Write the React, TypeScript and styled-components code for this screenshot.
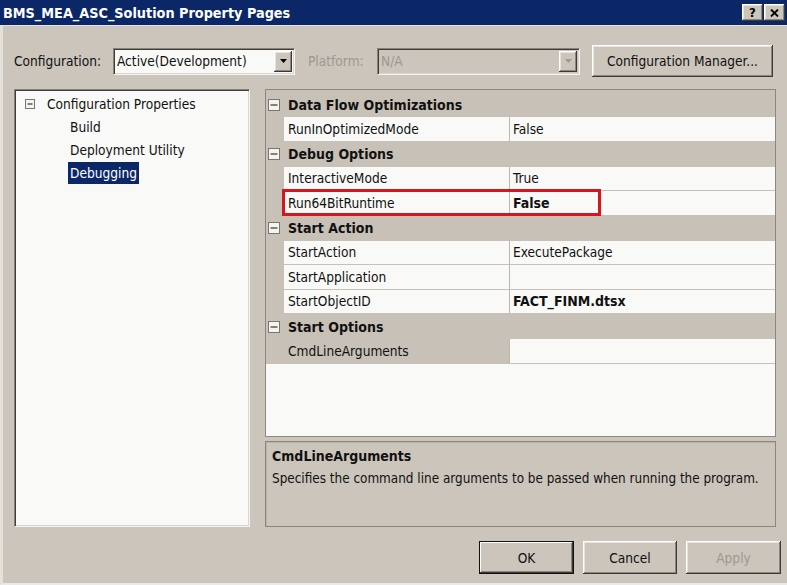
import React from "react";
import styled, { createGlobalStyle, css } from "styled-components";

const FONT = `"DejaVu Sans Condensed", "Liberation Sans", sans-serif`;
const FACE = "#cbc5bc";
const CAT = "#c8c1b7";
const PAPER = "#f9f9f7";

const Global = createGlobalStyle`
  html, body { margin: 0; padding: 0; background: #f2f0ec; }
  body { font-family: ${FONT}; font-size: 13.6px; color: #111; }
  * { box-sizing: border-box; }
`;

const Window = styled.div`
  width: 787px;
  height: 585px;
  display: flex;
  flex-direction: column;
  background: ${FACE};
  overflow: hidden;
`;

const TitleBar = styled.div`
  height: 26px;
  flex: none;
  display: flex;
  align-items: center;
  padding: 0 2px 0 3px;
  background: #0b2768;
  border-bottom: 1px solid #e4e0da;
`;

const TitleText = styled.div`
  flex: 1;
  color: #fff;
  font-weight: bold;
  font-size: 14.3px;
  white-space: nowrap;
`;

const raised = css`
  background: ${FACE};
  box-shadow: inset -1px -1px #3c3a36, inset 1px 1px #ffffff,
    inset -2px -2px #8a857d, inset 2px 2px #e6e2dc;
`;

const sunken = css`
  border-top: 1px solid #86827a;
  border-left: 1px solid #86827a;
  border-bottom: 1px solid #f6f4f0;
  border-right: 1px solid #f6f4f0;
  box-shadow: inset 1px 1px #3f3d3a, inset -1px -1px #d9d5ce;
`;

const CaptionButton = styled.div`
  ${raised};
  width: 21px;
  height: 17px;
  margin-left: 1px;
  display: flex;
  align-items: center;
  justify-content: center;
  font-weight: bold;
  font-size: 13px;
  color: #000;
`;

const Body = styled.div`
  flex: 1;
  display: flex;
  flex-direction: column;
  padding: 18px 11px 0 11px;
  border-left: 3px solid #e4e0da;
  border-bottom: 2px solid #ece9e4;
`;

const ConfigRow = styled.div`
  height: 34px;
  display: flex;
  align-items: center;
  padding-right: 3px;
`;

const FieldLabel = styled.div<{ $width: number; $indent?: number; $disabled?: boolean }>`
  width: ${(p) => p.$width}px;
  padding-left: ${(p) => p.$indent ?? 0}px;
  flex: none;
  white-space: nowrap;
  color: ${(p) => (p.$disabled ? "#9e988f" : "#111")};
`;

const Combo = styled.div<{ $width: number; $disabled?: boolean }>`
  ${sunken};
  width: ${(p) => p.$width}px;
  height: 27px;
  flex: none;
  display: flex;
  align-items: center;
  padding: 0 1px 0 3px;
  background: ${(p) => (p.$disabled ? FACE : PAPER)};
  color: ${(p) => (p.$disabled ? "#9e988f" : "#111")};
`;

const ComboText = styled.div`
  flex: 1;
  white-space: nowrap;
  overflow: hidden;
`;

const DropButton = styled.div`
  ${raised};
  width: 18px;
  height: 21px;
  margin-right: 1px;
  display: flex;
  align-items: center;
  justify-content: center;
`;

const PushButton = styled.div<{ $width: number; $default?: boolean; $disabled?: boolean }>`
  width: ${(p) => p.$width}px;
  height: 33px;
  flex: none;
  display: flex;
  align-items: center;
  justify-content: center;
  white-space: nowrap;
  color: ${(p) => (p.$disabled ? "#9e988f" : "#111")};
  ${raised};
  ${(p) =>
    p.$default &&
    css`
      box-shadow: inset 0 0 0 1px #111, inset -2px -2px #3c3a36, inset 2px 2px #ffffff,
        inset -3px -3px #8a857d;
    `}
`;

const ManagerButton = styled(PushButton)`
  height: 32px;
  margin-left: auto;
`;

const Main = styled.div`
  margin-top: 11px;
  height: 438px;
  display: flex;
  gap: 15px;
`;

const TreePanel = styled.div`
  ${sunken};
  width: 236px;
  flex: none;
  background: ${PAPER};
  padding-top: 2px;
`;

const TreeRow = styled.div<{ $indent: number }>`
  height: 23px;
  display: flex;
  align-items: center;
  gap: 10px;
  padding-left: ${(p) => p.$indent}px;
  white-space: nowrap;
`;

const TreeLabel = styled.span<{ $selected?: boolean }>`
  line-height: 22px;
  padding: 0 2px;
  ${(p) =>
    p.$selected &&
    css`
      background: #0b2768;
      color: #fff;
    `}
`;

const RightColumn = styled.div`
  width: 511px;
  flex: none;
  display: flex;
  flex-direction: column;
  gap: 4px;
`;

const Grid = styled.div`
  height: 348px;
  flex: none;
  display: flex;
  flex-direction: column;
  border: 1px solid #8b867e;
  padding-top: 2px;
  background: linear-gradient(${CAT} 0 2px, ${PAPER} 2px);
`;

const CategoryRow = styled.div`
  height: 25px;
  flex: none;
  display: flex;
  align-items: center;
  gap: 8px;
  padding-left: 2px;
  background: ${CAT};
  font-weight: bold;
  font-size: 14px;
  white-space: nowrap;
`;

const PropRow = styled.div`
  position: relative;
  height: 24.5px;
  flex: none;
  display: grid;
  grid-template-columns: 18px 226px 1fr;
`;

const MarginCell = styled.div`
  background: ${CAT};
`;

const NameCell = styled.div<{ $selected?: boolean }>`
  display: flex;
  align-items: center;
  padding-left: 4px;
  background: ${(p) => (p.$selected ? CAT : PAPER)};
  border-bottom: 1px solid ${CAT};
  border-right: 1px solid #bdb7ae;
  white-space: nowrap;
`;

const ValueCell = styled.div<{ $bold?: boolean }>`
  display: flex;
  align-items: center;
  padding-left: 3px;
  background: ${PAPER};
  border-bottom: 1px solid ${CAT};
  font-weight: ${(p) => (p.$bold ? "bold" : "normal")};
  font-size: ${(p) => (p.$bold ? "14px" : "inherit")};
  white-space: nowrap;
`;

const Annotation = styled.div`
  position: absolute;
  left: 16px;
  top: -2px;
  width: 319px;
  height: 27px;
  border: 3px solid #d8141c;
  z-index: 2;
  pointer-events: none;
`;

const Filler = styled.div`
  flex: 1;
  background: ${PAPER};
`;

const Description = styled.div`
  height: 86px;
  flex: none;
  border: 1px solid #8b867e;
  box-shadow: inset 1px 1px #b8b2a8;
  padding: 5px 6px;
  line-height: 18px;
`;

const DescTitle = styled.div`
  font-weight: bold;
  font-size: 14px;
`;

const DescText = styled.div`
  margin-top: 5px;
  font-size: 13.4px;
  white-space: nowrap;
`;

const Footer = styled.div`
  margin-top: 14px;
  margin-right: -5px;
  display: flex;
  justify-content: flex-end;
  gap: 9px;
`;

const MinusBox = ({ size }: { size: number }) => (
  <svg width={size} height={size} viewBox={`0 0 ${size} ${size}`} style={{ flex: "none" }}>
    <rect x="0.5" y="0.5" width={size - 1} height={size - 1} fill="#f4f3f0" stroke="#7a766f" />
    <line x1="2.5" y1={size / 2} x2={size - 2.5} y2={size / 2} stroke="#111" strokeWidth="1" />
  </svg>
);

const Arrow = ({ color }: { color: string }) => (
  <svg width="7" height="4" viewBox="0 0 7 4">
    <polygon points="0,0 7,0 3.5,4" fill={color} />
  </svg>
);

type Prop = { name: string; value?: string; bold?: boolean; selected?: boolean; marked?: boolean };
type Category = { title: string; props: Prop[] };

const categories: Category[] = [
  { title: "Data Flow Optimizations", props: [{ name: "RunInOptimizedMode", value: "False" }] },
  {
    title: "Debug Options",
    props: [
      { name: "InteractiveMode", value: "True" },
      { name: "Run64BitRuntime", value: "False", bold: true, marked: true },
    ],
  },
  {
    title: "Start Action",
    props: [
      { name: "StartAction", value: "ExecutePackage" },
      { name: "StartApplication", value: "" },
      { name: "StartObjectID", value: "FACT_FINM.dtsx", bold: true },
    ],
  },
  { title: "Start Options", props: [{ name: "CmdLineArguments", value: "", selected: true }] },
];

export default function App() {
  return (
    <>
      <Global />
      <Window>
        <TitleBar>
          <TitleText>BMS_MEA_ASC_Solution Property Pages</TitleText>
          <CaptionButton>?</CaptionButton>
          <CaptionButton>
            <svg width="9" height="8" viewBox="0 0 9 8">
              <path d="M1 0.5 L8 7.5 M8 0.5 L1 7.5" stroke="#000" strokeWidth="1.8" />
            </svg>
          </CaptionButton>
        </TitleBar>
        <Body>
          <ConfigRow>
            <FieldLabel $width={99}>Configuration:</FieldLabel>
            <Combo $width={182}>
              <ComboText>Active(Development)</ComboText>
              <DropButton>
                <Arrow color="#000" />
              </DropButton>
            </Combo>
            <FieldLabel $width={82} $indent={13} $disabled>
              Platform:
            </FieldLabel>
            <Combo $width={203} $disabled>
              <ComboText>N/A</ComboText>
              <DropButton>
                <Arrow color="#9e988f" />
              </DropButton>
            </Combo>
            <ManagerButton $width={181}>Configuration Manager...</ManagerButton>
          </ConfigRow>
          <Main>
            <TreePanel>
              <TreeRow $indent={10}>
                <MinusBox size={10} />
                <TreeLabel>Configuration Properties</TreeLabel>
              </TreeRow>
              <TreeRow $indent={53}>
                <TreeLabel>Build</TreeLabel>
              </TreeRow>
              <TreeRow $indent={53}>
                <TreeLabel>Deployment Utility</TreeLabel>
              </TreeRow>
              <TreeRow $indent={53}>
                <TreeLabel $selected>Debugging</TreeLabel>
              </TreeRow>
            </TreePanel>
            <RightColumn>
              <Grid>
                {categories.map((c) => (
                  <React.Fragment key={c.title}>
                    <CategoryRow>
                      <MinusBox size={12} />
                      {c.title}
                    </CategoryRow>
                    {c.props.map((p) => (
                      <PropRow key={p.name}>
                        <MarginCell />
                        <NameCell $selected={p.selected}>{p.name}</NameCell>
                        <ValueCell $bold={p.bold}>{p.value}</ValueCell>
                        {p.marked && <Annotation />}
                      </PropRow>
                    ))}
                  </React.Fragment>
                ))}
                <Filler />
              </Grid>
              <Description>
                <DescTitle>CmdLineArguments</DescTitle>
                <DescText>Specifies the command line arguments to be passed when running the program.</DescText>
              </Description>
            </RightColumn>
          </Main>
          <Footer>
            <PushButton $width={95} $default>
              OK
            </PushButton>
            <PushButton $width={94}>Cancel</PushButton>
            <PushButton $width={95} $disabled>
              Apply
            </PushButton>
          </Footer>
        </Body>
      </Window>
    </>
  );
}
